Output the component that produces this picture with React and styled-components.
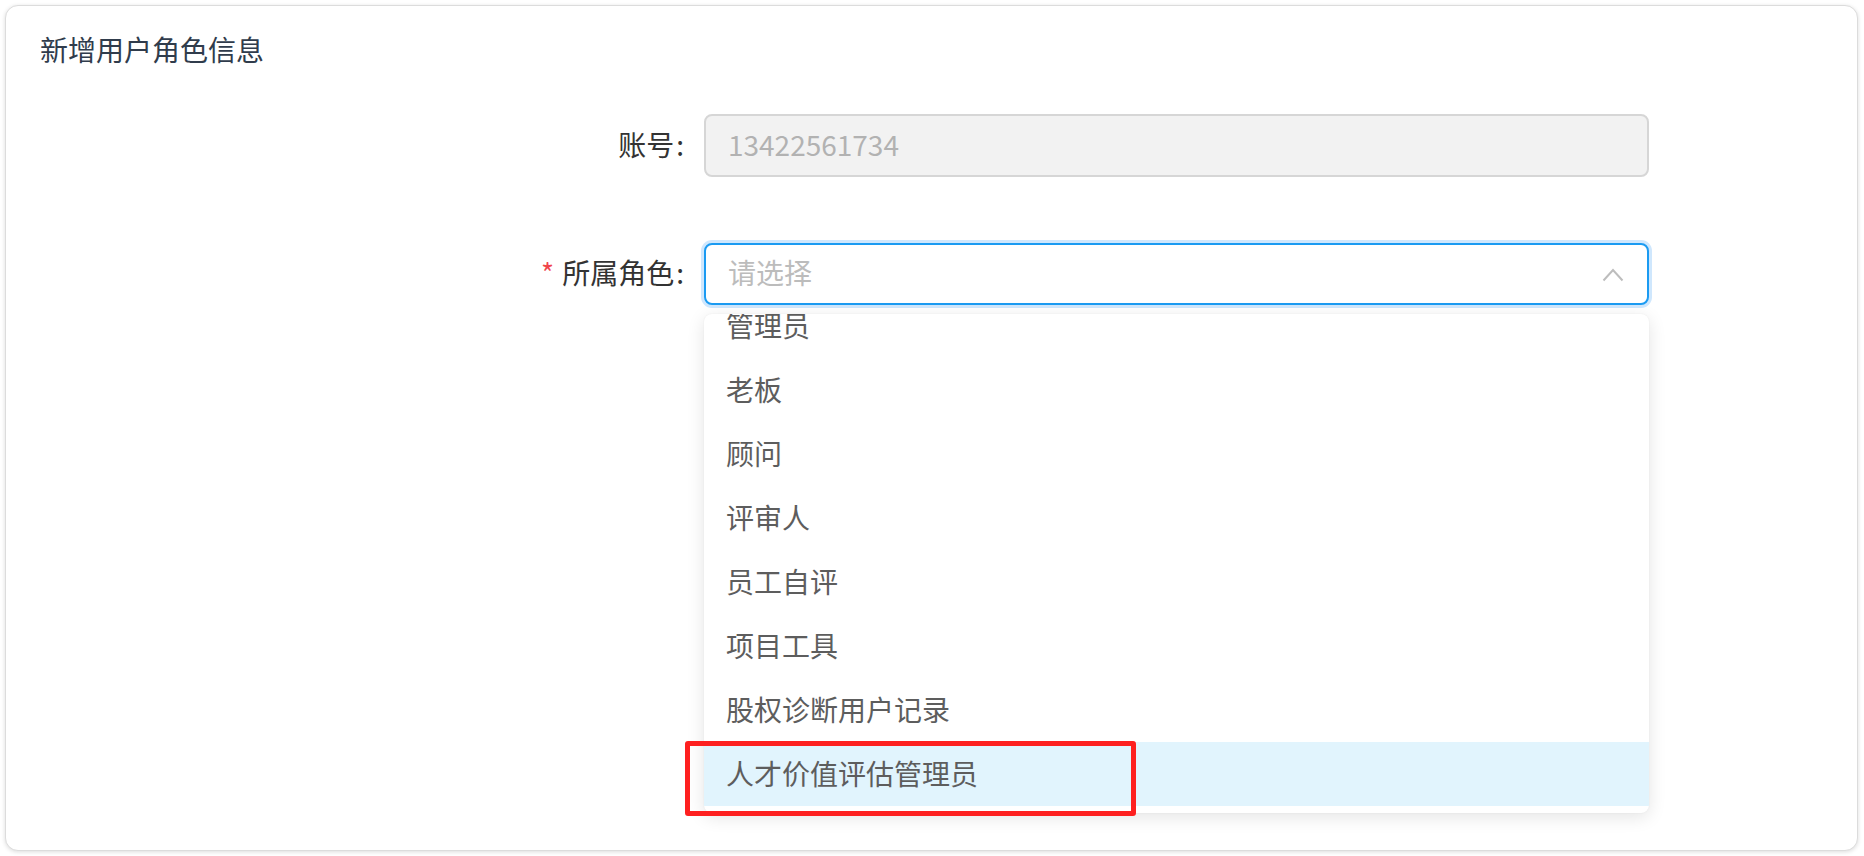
import React, { useLayoutEffect, useRef } from "react";
import styled, { createGlobalStyle } from "styled-components";

const GlobalStyle = createGlobalStyle`
  html, body {
    margin: 0;
    padding: 0;
    background: #ffffff;
  }
  * { box-sizing: border-box; }
  body {
    font-family: "Noto Sans CJK SC", "Noto Sans", sans-serif;
  }
`;

const Page = styled.div`
  width: 1864px;
  height: 856px;
  padding: 5px 6px 5px 5px;
`;

const Card = styled.section`
  height: 100%;
  background: #ffffff;
  border: 1px solid #dcdcdc;
  border-radius: 13px;
  box-shadow: 0 1px 4px rgba(0, 0, 0, 0.14);
  padding: 23px 0 0 34px;
`;

const Title = styled.h2`
  margin: 0;
  font-size: 28px;
  line-height: 40px;
  font-weight: 400;
  color: #303c4c;
`;

const Form = styled.div`
  margin-top: 45px;
  display: flex;
  flex-direction: column;
  gap: 66px;
`;

const Row = styled.div`
  display: flex;
  align-items: center;
`;

const Label = styled.label`
  width: 664px;
  padding: 0 20px 4px 0;
  text-align: right;
  font-size: 28px;
  line-height: 40px;
  color: #333333;
  white-space: nowrap;
`;

const Colon = styled.span`
  margin-left: 2px;
`;

const Star = styled.span`
  color: #f0454b;
  margin-right: 8px;
`;

const Field = styled.div`
  position: relative;
  width: 945px;
`;

const Box = styled.div`
  height: ${(p) => (p.$h ? p.$h : 62)}px;
  display: flex;
  align-items: center;
  padding: 0 23px 4px 22px;
  border-radius: 8px;
  font-size: 28px;
  border: 2px solid ${(p) => (p.$focus ? "#1b9bf2" : "#d6d6d6")};
  background: ${(p) => (p.$disabled ? "#f2f2f2" : "#ffffff")};
  color: ${(p) => (p.$disabled ? "#b2b2b2" : "#bcbcbc")};
  box-shadow: ${(p) => (p.$focus ? "0 0 0 3px #cfe7fd" : "none")};
`;

const BoxText = styled.span`
  flex: 1;
`;

const Chevron = styled.svg`
  width: 22px;
  height: 16px;
  margin-top: 4px;
`;

const Dropdown = styled.div`
  position: absolute;
  left: 0;
  top: 71px;
  width: 945px;
  background: #ffffff;
  border-radius: 8px;
  box-shadow: 0 4px 18px rgba(0, 0, 0, 0.11), 0 0 2px rgba(0, 0, 0, 0.06);
`;

const Scroller = styled.ul`
  margin: 0;
  list-style: none;
  height: 499px;
  overflow-y: auto;
  padding: 6px 0 7px;
  scrollbar-width: none;
  border-radius: 8px;
  &::-webkit-scrollbar { display: none; }
`;

const Item = styled.li`
  height: 64px;
  display: flex;
  align-items: center;
  padding: 0 0 2px 22px;
  font-size: 28px;
  color: #5d5d5d;
  background: ${(p) => (p.$hover ? "#e1f4fd" : "transparent")};
`;

const Annotation = styled.div`
  position: absolute;
  left: -19px;
  top: 427px;
  width: 451px;
  height: 75px;
  border: 5px solid #fe2020;
  border-radius: 3px;
  pointer-events: none;
`;

const roles = [
  "管理员",
  "老板",
  "顾问",
  "评审人",
  "员工自评",
  "项目工具",
  "股权诊断用户记录",
  "人才价值评估管理员",
];

export default function App() {
  const ref = useRef(null);
  useLayoutEffect(() => {
    if (ref.current) ref.current.scrollTop = ref.current.scrollHeight;
  }, []);
  return (
    <>
      <GlobalStyle />
      <Page>
        <Card>
          <Title>新增用户角色信息</Title>
          <Form>
            <Row>
              <Label>
                账号<Colon>:</Colon>
              </Label>
              <Field>
                <Box $disabled $h={63}>
                  <BoxText>13422561734</BoxText>
                </Box>
              </Field>
            </Row>
            <Row>
              <Label>
                <Star>*</Star>所属角色<Colon>:</Colon>
              </Label>
              <Field>
                <Box $focus>
                  <BoxText>请选择</BoxText>
                  <Chevron viewBox="0 0 22 16">
                    <polyline
                      points="1.5,14.5 11,4 20.5,14.5"
                      fill="none"
                      stroke="#bdbdbd"
                      strokeWidth="2"
                    />
                  </Chevron>
                </Box>
                <Dropdown>
                  <Scroller ref={ref}>
                    {roles.map((r, i) => (
                      <Item key={r} $hover={i === roles.length - 1}>
                        {r}
                      </Item>
                    ))}
                  </Scroller>
                  <Annotation />
                </Dropdown>
              </Field>
            </Row>
          </Form>
        </Card>
      </Page>
    </>
  );
}
